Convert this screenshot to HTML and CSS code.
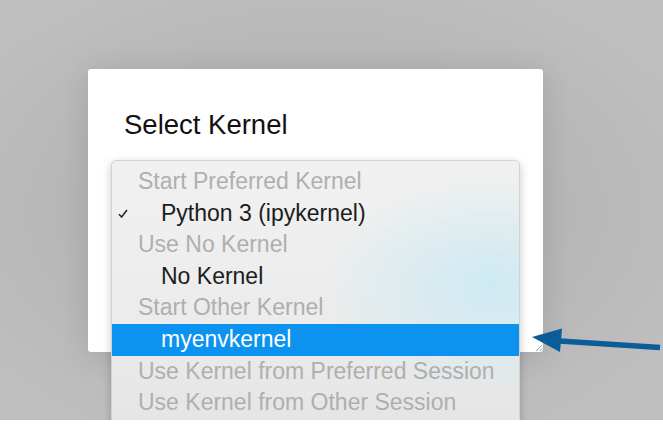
FILE: index.html
```html
<!DOCTYPE html>
<html>
    <head>
        <title>Select Kernel</title>
        <link rel="stylesheet" href="styles.css">
    </head>
    <body>
        <div class="screen">
            <div class="dialog">
                <div class="dialog-title">Select Kernel</div>

                <div class="kernel-menu">
                    <div class="menu-header">Start Preferred Kernel</div>
                    <div class="menu-item">
                        <span class="check">
                            <svg width="10" height="9" viewBox="0 0 10 9">
                                <path d="M1 5.2 L3.6 8 L9 1" fill="none" stroke="#222" stroke-width="1.5"/>
                            </svg>
                        </span>
                        Python 3 (ipykernel)
                    </div>
                    <div class="menu-header">Use No Kernel</div>
                    <div class="menu-item"><span class="check"></span>No Kernel</div>
                    <div class="menu-header">Start Other Kernel</div>
                    <div class="menu-item selected"><span class="check"></span>myenvkernel</div>
                    <div class="menu-header">Use Kernel from Preferred Session</div>
                    <div class="menu-header">Use Kernel from Other Session</div>
                    <div class="menu-header"></div>
                </div>

                <svg class="grip" width="9" height="9" viewBox="0 0 9 9">
                    <path d="M2 8 L8 2 M5.5 8 L8 5.5" stroke="#9a9a9a" stroke-width="1"/>
                </svg>
            </div>

            <!-- annotation arrow -->
            <svg class="arrow" width="663" height="420" viewBox="0 0 663 420">
                <line x1="552" y1="340.5" x2="660" y2="347.5" stroke="#0b5d99" stroke-width="5.5"/>
                <polygon points="532,337 562,328.5 560,352" fill="#0b5d99"/>
            </svg>
        </div>
    </body>
</html>
```

FILE: styles.css
```css
html, body {
    margin: 0;
    padding: 0;
    background: white;
    overflow: hidden;
    font-family: "Liberation Sans", Arial, sans-serif;
}
.screen {
    position: relative;
    height: 420px;
    overflow: hidden;
    background: radial-gradient(ellipse 420px 260px at 316px 210px, #ababab, #bfbfbf 100%);
    padding-top: 69px;
    box-sizing: border-box;
}
.dialog {
    position: relative;
    margin-left: 88px;
    width: 455px;
    height: 283px;
    background: white;
    border-radius: 3px;
    box-shadow: 0 4px 30px rgba(0, 0, 0, 0.12);
    padding: 40px 36px 0;
    box-sizing: border-box;
}
.dialog-title {
    font-size: 27.5px;
    line-height: 32px;
    color: #111;
}
.kernel-menu {
    position: absolute;
    left: 23px;
    top: 91px;
    width: 409px;
    padding-top: 5px;
    border: 1px solid #d2d2d2;
    border-radius: 5px;
    box-sizing: border-box;
    background:
        radial-gradient(ellipse 170px 110px at 380px 125px, rgba(203, 234, 243, 0.95), rgba(203, 234, 243, 0) 100%),
        linear-gradient(#f1f1f1, #ebebeb 60%, #e3e3e3);
    box-shadow: 0 3px 10px rgba(0, 0, 0, 0.22);
    font-size: 23px;
}
.menu-header, .menu-item {
    height: 31.6px;
    line-height: 31.6px;
    white-space: nowrap;
}
.menu-header {
    padding-left: 26px;
    color: #afafaf;
}
.menu-item {
    display: flex;
    align-items: center;
    color: #1c1c1c;
}
.check {
    width: 49px;
    padding-left: 6px;
    box-sizing: border-box;
    display: flex;
    align-items: center;
}
.menu-item.selected {
    background: #0b93ef;
    color: white;
}
.grip {
    position: absolute;
    right: 0;
    bottom: 0;
}
.arrow {
    position: absolute;
    left: 0;
    top: 0;
}
```
